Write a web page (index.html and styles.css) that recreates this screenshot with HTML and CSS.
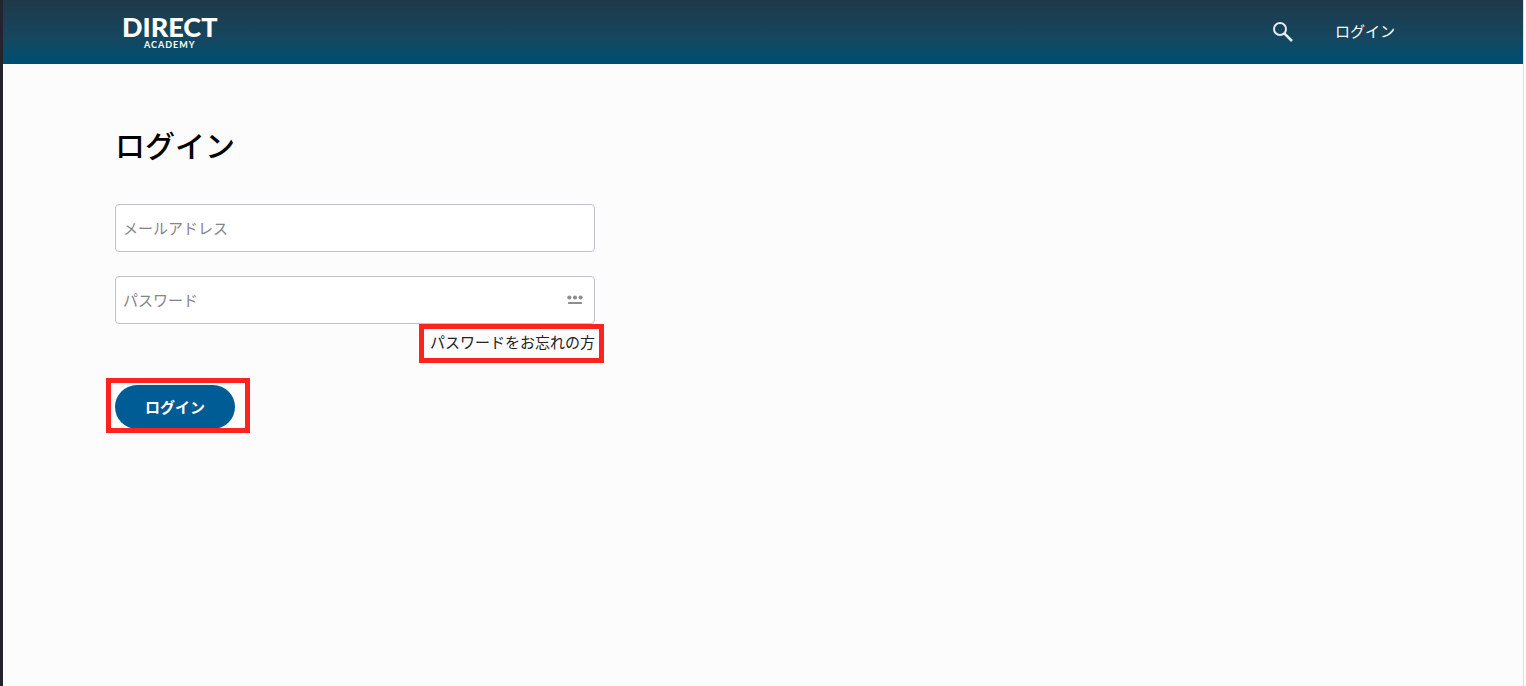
FILE: index.html
```html
<!DOCTYPE html>
<html lang="ja">
<head>
    <meta charset="UTF-8">
    <meta name="viewport" content="width=device-width, initial-scale=1.0">
    <title>ログイン | DIRECT ACADEMY</title>
    <link rel="stylesheet" href="styles.css">
</head>
<body>
    <div class="page">
        <header class="header">
            <a class="logo" href="#">
                <span class="logo-main">DIRECT</span>
                <span class="logo-sub">ACADEMY</span>
            </a>
            <nav class="nav">
                <button class="search-button" type="button" aria-label="検索">
                    <svg width="22" height="22" viewBox="0 0 22 22" fill="none" stroke="currentColor">
                        <circle cx="8" cy="8" r="6" stroke-width="2"/>
                        <path d="M12.3 12.3L20 20" stroke-width="2.6"/>
                    </svg>
                </button>
                <a class="nav-link" href="#">ログイン</a>
            </nav>
        </header>

        <main class="main">
            <h1 class="title">ログイン</h1>
            <form class="login-form">
                <input class="input" type="email" placeholder="メールアドレス" aria-label="メールアドレス">
                <div class="password">
                    <input class="input" type="password" placeholder="パスワード" aria-label="パスワード">
                    <svg class="password-icon" width="16" height="10" viewBox="0 0 16 10" fill="#8e8e8e">
                        <circle cx="2.4" cy="2.5" r="2.1"/>
                        <circle cx="8" cy="2.5" r="2.1"/>
                        <circle cx="13.6" cy="2.5" r="2.1"/>
                        <rect x="1" y="7" width="14" height="2" rx="0.5"/>
                    </svg>
                </div>
                <div class="forgot marked">
                    <a class="forgot-link" href="#">パスワードをお忘れの方</a>
                </div>
                <div class="submit marked">
                    <button class="submit-button" type="submit">ログイン</button>
                </div>
            </form>
        </main>
    </div>
</body>
</html>
```
FILE: styles.css
```css
* {
    box-sizing: border-box;
}

body {
    margin: 0;
    background: #fcfcfc;
    color: #000;
    font-family: "Noto Sans CJK JP", sans-serif;
    font-size: 15px;
    line-height: 24px;
}

a {
    color: inherit;
    text-decoration: none;
}

.page {
    min-height: 100vh;
    margin-right: 2px;
    border-left: 3px solid #25232c;
    border-right: 1px solid #e0e0e2;
}

.header {
    display: flex;
    align-items: center;
    justify-content: space-between;
    height: 64px;
    padding: 0 128px 0 119px;
    background: linear-gradient(#1f394a, #15475f 60%, #004d70 92%);
    color: #fff;
}

.logo {
    display: flex;
    flex-direction: column;
    align-items: center;
    font-family: Lato, sans-serif;
}

.logo-main {
    font-size: 27px;
    font-weight: 900;
    line-height: 26px;
}

.logo-sub {
    font-size: 9px;
    font-weight: 700;
    line-height: 10px;
    letter-spacing: 1px;
}

.nav {
    display: flex;
    align-items: center;
    gap: 41px;
}

.nav-link {
    padding-bottom: 2px;
}

.search-button {
    display: flex;
    padding: 0;
    border: 0;
    background: none;
    color: #e6edf5;
    cursor: pointer;
}

.main {
    padding: 58px 112px;
}

.title {
    margin: 0 0 38px;
    font-size: 30px;
    font-weight: 500;
    line-height: 44px;
}

.login-form {
    max-width: 480px;
}

.input {
    display: block;
    width: 100%;
    height: 48px;
    padding: 0 7px 2px;
    border: 1px solid #c1c1cd;
    border-radius: 4px;
    background: #fff;
    font: inherit;
}

.input::placeholder {
    color: #84848c;
    opacity: 1;
}

.password {
    position: relative;
    margin-top: 24px;
}

.password-icon {
    position: absolute;
    top: 19px;
    right: 12px;
}

/* red frame around the highlighted controls */
.marked {
    position: relative;
    width: fit-content;
}

.marked::after {
    content: "";
    position: absolute;
    border: 5px solid #ff231f;
    pointer-events: none;
}

.forgot {
    margin: 6px 0 0 auto;
    color: #222;
}

.forgot::after {
    inset: -6px -9px -9px -11px;
}

.forgot-link {
    display: block;
}

.submit {
    margin-top: 31px;
}

.submit::after {
    inset: -7px -15px -4px -9px;
}

.submit-button {
    display: block;
    width: 120px;
    height: 44px;
    padding: 0;
    border: 0;
    border-radius: 22px;
    background: #005c95;
    color: #fff;
    font: inherit;
    font-weight: 700;
    cursor: pointer;
}
```
